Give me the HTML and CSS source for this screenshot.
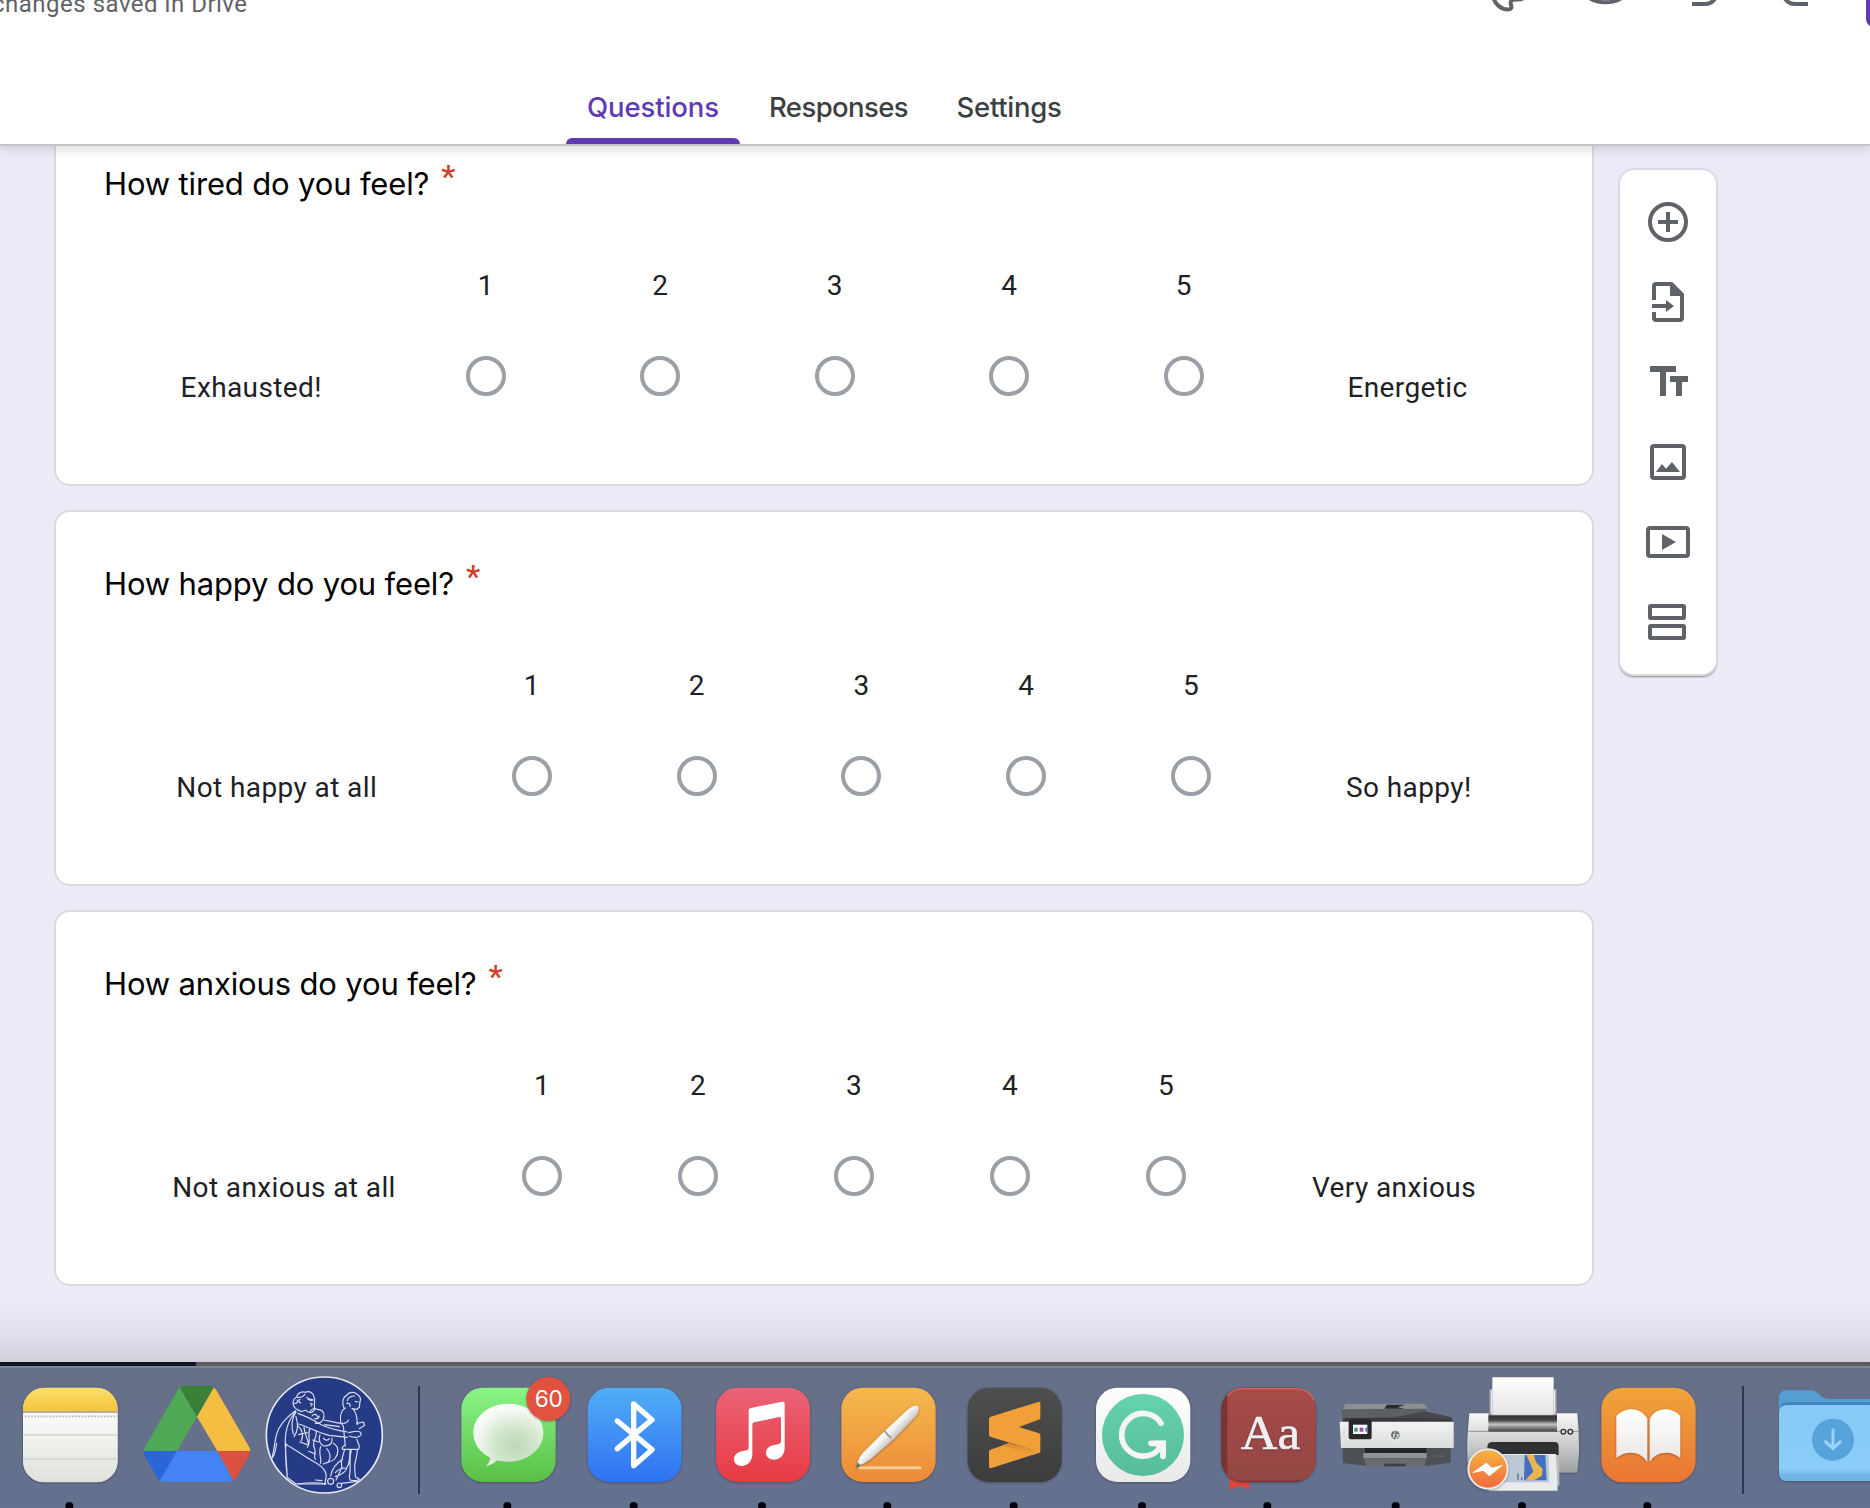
FILE: index.html
```html
<!DOCTYPE html>
<html lang="en">
<head>
<meta charset="utf-8">
<title>Form editor</title>
<link rel="stylesheet" href="styles.css">
</head>
<body>
<div class="screen">
  <header class="header">
    <div class="header-top">
      <span class="save-state">changes saved in Drive</span>
      <svg class="header-icons" width="330" height="14" viewBox="0 0 330 14" fill="none" stroke="#5f6368" stroke-width="4">
        <path d="M3-3C5 4 11 9.500 17.500 9.500c4 0 4.500-2 3.500-4.500C20 1.500 21-.500 25-.500c5 .500 9-.500 12-4"/>
        <path d="M98-3a24 17 0 0 0 35 0"/>
        <path d="M202 4h13c5 0 9-3 11-7M318 4h-13c-5 0-9-3-11-7"/>
      </svg>
      <span class="send-button"></span>
    </div>
    <nav class="tabs">
      <a class="tab tab-active">Questions</a>
      <a class="tab tab-responses">Responses</a>
      <a class="tab tab-settings">Settings</a>
    </nav>
  </header>

  <main class="canvas">
    <div class="cards">
      <section class="card">
        <h2 class="question">How tired do you feel?<span class="required">*</span></h2>
        <div class="scale scale-tired">
          <span class="end">Exhausted!</span>
          <label class="choice">1<i class="radio"></i></label>
          <label class="choice">2<i class="radio"></i></label>
          <label class="choice">3<i class="radio"></i></label>
          <label class="choice">4<i class="radio"></i></label>
          <label class="choice">5<i class="radio"></i></label>
          <span class="end">Energetic</span>
        </div>
      </section>
      <section class="card">
        <h2 class="question">How happy do you feel?<span class="required">*</span></h2>
        <div class="scale scale-happy">
          <span class="end">Not happy at all</span>
          <label class="choice">1<i class="radio"></i></label>
          <label class="choice">2<i class="radio"></i></label>
          <label class="choice">3<i class="radio"></i></label>
          <label class="choice">4<i class="radio"></i></label>
          <label class="choice">5<i class="radio"></i></label>
          <span class="end">So happy!</span>
        </div>
      </section>
      <section class="card">
        <h2 class="question">How anxious do you feel?<span class="required">*</span></h2>
        <div class="scale scale-anxious">
          <span class="end">Not anxious at all</span>
          <label class="choice">1<i class="radio"></i></label>
          <label class="choice">2<i class="radio"></i></label>
          <label class="choice">3<i class="radio"></i></label>
          <label class="choice">4<i class="radio"></i></label>
          <label class="choice">5<i class="radio"></i></label>
          <span class="end">Very anxious</span>
        </div>
      </section>
    </div>

    <aside class="toolbar">
      <svg class="tool" viewBox="0 0 24 24"><g fill="none" stroke="#5f6368" stroke-width="2"><circle cx="12" cy="12" r="9"/><path d="M12 7v10M7 12h10"/></g></svg>
      <svg class="tool" viewBox="0 0 24 24"><path d="M5 11V4a1 1 0 0 1 1-1h7.600L19 8.400V20a1 1 0 0 1-1 1H6a1 1 0 0 1-1-1v-3" fill="none" stroke="#5f6368" stroke-width="2"/><path d="M13 2h1l6 6v1h-7zM4 13h7v-2l4 3-4 3v-2H4z" fill="#5f6368"/></svg>
      <svg class="tool" viewBox="0 0 24 24"><path d="M3 4h13v3h-5v12H8V7H3zM13 9h9v3h-3v7h-3v-7h-3z" fill="#5f6368"/></svg>
      <svg class="tool" viewBox="0 0 24 24"><rect x="4" y="4" width="16" height="16" rx="1" fill="none" stroke="#5f6368" stroke-width="2"/><path d="M6 17l3-4 2 2.400L14 12l4 5z" fill="#5f6368"/></svg>
      <svg class="tool" viewBox="0 0 24 24"><rect x="2" y="5" width="20" height="14" rx="1" fill="none" stroke="#5f6368" stroke-width="2"/><path d="M9 8l7 4-7 4z" fill="#5f6368"/></svg>
      <svg class="tool" viewBox="0 0 24 24"><g fill="none" stroke="#5f6368" stroke-width="2"><rect x="3" y="4" width="17" height="6" rx=".4"/><rect x="3" y="14" width="17" height="6" rx=".4"/></g></svg>
    </aside>
  </main>

  <div class="window-edge"></div>

  <footer class="dock">
    <!-- Notes -->
    <svg class="app" viewBox="23 84 380 420">
      <defs>
        <clipPath id="notesClip"><rect x="71" y="143" width="284" height="284" rx="64"/></clipPath>
        <linearGradient id="notesTop" x2="0" y2="1"><stop stop-color="#fbdf6c"/><stop offset="1" stop-color="#f5c43c"/></linearGradient>
        <linearGradient id="notesPaper" x2="0" y2="1"><stop stop-color="#fafaf9"/><stop offset="1" stop-color="#e1e1dc"/></linearGradient>
      </defs>
      <rect class="lift" x="71" y="143" width="284" height="284" rx="64" fill="#e1e1dc"/>
      <g clip-path="url(#notesClip)">
        <path fill="url(#notesPaper)" d="M71 217h284v210H71z"/>
        <path fill="url(#notesTop)" d="M71 143h284v71H71z"/>
        <path fill="#b5ad98" d="M71 213h284v6H71z"/>
        <path d="M76 229h278" stroke="#b9b9b9" stroke-width="5" stroke-dasharray="5 4.500"/>
        <path d="M71 285h284M71 357h284" stroke="#d2d2d0" stroke-width="5"/>
      </g>
      <circle cx="210" cy="498" r="12" fill="#04040f"/>
    </svg>
    <!-- Drive -->
    <svg class="app" viewBox="403 84 380 420">
      <path fill="#4fa955" d="M430 332 L533 152q4-9 8-9l51 87-60 103z"/>
      <path fill="#3a8038" d="M541 144q5-7 12-7h76q8 0 13 7l-50 86z"/>
      <path fill="#f5bd42" d="M642 143q5 2 9 9l98 170q3 6 3 11H653L592 230z"/>
      <path fill="#2a66d6" d="M430 333h102l-51 89q-5-3-7-7l-40-68q-4-8-4-14z"/>
      <path fill="#4483f5" d="M532 333h121l48 88q-6 4-12 4H494q-7 0-13-4z"/>
      <path fill="#d95140" d="M653 333h99q-1 8-4 14l-38 67q-4 6-9 7z"/>
    </svg>
    <!-- Emblem -->
    <svg class="app" viewBox="783 84 380 420">
      <circle cx="973" cy="285" r="174" fill="#263b86" stroke="#e9ebf4" stroke-width="5"/>
      <g fill="none" stroke="#d9def0" stroke-width="3.500" stroke-linecap="round" stroke-linejoin="round">
        <path d="M886 205c-12-14-6-30 4-34 2-14 18-18 26-14 14-6 26 4 26 14 6 8 0 18 1 26l1 12-8 8c-8 2-14-2-18-6M890 207c8 8 18 8 26 4M893 172c12 2 20-6 22-10M902 188c-6 0-8-8-2-10M924 178l12 4M931 190l6 2-4 6M884 190c6 2 10-4 8-10M940 180c-8-4-16 0-20-8"/>
        <path d="M886 212c-24 18-48 40-56 70-6 24-8 50-14 72M818 352c10-14 8-28 12-42M888 214c-26 28-34 64-32 104l6 96M862 414c-4-40-8-70-4-104M860 314c30 18 60 40 90 56 20 12 32 26 28 44l-4 20M888 216c-12 18-16 40-8 66M888 230c6 20 6 44-6 60M864 414l24 18 90 0M892 256c14 12 20 28 12 46M946 420l20 2M896 252c30 10 60 26 92 34l54 6"/>
        <path d="M894 220c30 10 52 24 70 34 30 14 54 18 78 22M930 218c2-12 14-14 22-10 12 0 22 8 20 22-2 16-16 22-26 20M936 228c6-8 14-6 16 2M944 236c8 2 12-2 14-8M972 240l48 10M974 254l44 6"/>
        <path d="M1032 204c-8-18-2-34 8-38 8-12 24-10 30-4 10 4 14 16 10 22l-2 18-8 6-14-2M1042 182c0-8 12-14 22-14M1040 190c8-2 12 4 10 10M1066 184l8 2M1036 204c-14 8-16 28-14 44l8 10 6 60M1022 248c10 4 20 0 24-8M1058 206c12 12 14 28 14 48M1070 250l20-4 4 10-16 10M1046 278c10-2 24-8 34-2 8 6 2 12-4 14-10 4-20 2-28-2M1034 316c-10 6-8 10-6 12h48l2-10-8-20"/>
        <path d="M912 262c2 20 10 30 14 52M930 266c-10 18 6 34-8 56M948 272c6 20-16 34-4 54 6 12-6 22 2 32M960 284c-6 14 0 30 12 34 14 0 26-4 24-24M970 294c4 8 14 8 18 2M962 320c-8 20 4 38 0 50M1000 310c18 10 16 32 6 44-8 12-26 12-36 18M980 326c10 10 14 26 6 38M896 284l26-6M900 306l22 8M938 300l18 6M926 334l20 8"/>
        <path d="M1034 328c-6 24-14 36-8 54l-18 38M1050 330c0 22 0 40-10 54-2 16-24 22-34 26M1072 330c0 20-8 34-8 50l2 30 12 8c-6 6-18 4-28 2l-2-10c6-26-2-54 6-78M1028 358c-16 10-32 26-36 50M1040 384c-16 0-28 6-34 14"/>
        <circle cx="992" cy="424" r="9"/><circle cx="1018" cy="436" r="7"/><path d="M892 432c28-4 58-6 86 0M1024 430l48-6"/>
      </g>
    </svg>
    <i class="divider divider-left"></i>
    <!-- Messages -->
    <svg class="app" viewBox="17 84 380 420">
      <defs>
        <linearGradient id="msgBg" x2="0" y2="1"><stop stop-color="#8af584"/><stop offset="1" stop-color="#59bf47"/></linearGradient>
        <radialGradient id="msgBubble" cx=".6" cy=".68" r=".68"><stop stop-color="#bcd9b5"/><stop offset=".45" stop-color="#d3e6ce"/><stop offset=".8" stop-color="#f1f7ef"/><stop offset="1" stop-color="#fdfefd"/></radialGradient>
      </defs>
      <rect class="lift" x="66" y="143" width="283" height="283" rx="64" fill="url(#msgBg)"/>
      <path fill="url(#msgBubble)" d="M207 191c58 0 105 38 105 87s-47 87-105 87c-12 0-22-1-33-4-9 9-22 15-34 17 7-6 12-16 13-25-31-15-51-43-51-75 0-49 47-87 105-87z"/>
      <circle class="lift" cx="327" cy="177" r="66" fill="#e25241"/>
      <text x="328" y="202" font-family="Inter, sans-serif" font-size="68" letter-spacing="-1" text-anchor="middle" fill="#fff">60</text>
      <circle cx="204" cy="498" r="12" fill="#04040f"/>
    </svg>
    <!-- Bluetooth -->
    <svg class="app" viewBox="397 84 380 420">
      <defs><linearGradient id="btBg" x2="0" y2="1"><stop stop-color="#51aef5"/><stop offset="1" stop-color="#2f72f3"/></linearGradient></defs>
      <rect class="lift" x="444" y="143" width="282" height="283" rx="64" fill="url(#btBg)"/>
      <path d="M533 243L637 329 582 377V192L637 239 533 326" fill="none" stroke="#fff" stroke-width="16" stroke-linecap="round" stroke-linejoin="round"/>
      <circle cx="582" cy="498" r="12" fill="#04040f"/>
    </svg>
    <!-- Music -->
    <svg class="app" viewBox="777 84 380 420">
      <defs><linearGradient id="musicBg" x2="0" y2="1"><stop stop-color="#ea6377"/><stop offset="1" stop-color="#e73b43"/></linearGradient></defs>
      <rect class="lift" x="828" y="143" width="282" height="283" rx="64" fill="url(#musicBg)"/>
      <path fill="#fff" d="M926 211q0-6 7-7l94-19q7-1 7 6v133c0 21-14 35-32 35-14 0-24-8-24-20 0-13 10-21 24-24l15-3q6-2 6-8v-68q0-6-6-5l-75 16q-5 1-5 7v88c0 21-14 36-32 36-14 0-23-9-23-20 0-13 10-21 23-24l15-3q6-2 6-8z"/>
      <circle cx="966" cy="498" r="12" fill="#04040f"/>
    </svg>
    <!-- Pages -->
    <svg class="app" viewBox="17 84 380 420">
      <defs>
        <linearGradient id="pagesBg" x2="0" y2="1"><stop stop-color="#f5b94d"/><stop offset="1" stop-color="#ec8b38"/></linearGradient>
        <linearGradient id="penBody" gradientUnits="userSpaceOnUse" x1="190" y1="260" x2="225" y2="295"><stop stop-color="#fff"/><stop offset=".5" stop-color="#f5f5f5"/><stop offset="1" stop-color="#c9c4c0"/></linearGradient>
      </defs>
      <rect class="lift" x="66" y="143" width="283" height="283" rx="64" fill="url(#pagesBg)"/>
      <path d="M122 383h180" stroke="#f8cc99" stroke-width="9" stroke-linecap="round"/>
      <path class="lift" fill="url(#penBody)" d="M108 385l12-32 10-14 66-66 70-65c12-9 24-14 30-11 6 4 3 17-5 30l-64 68-72 62-22 14-12 4z"/>
      <path d="M196 273q8 12 20 21" fill="none" stroke="#9b948c" stroke-width="5"/><path d="M108 385l7-18 9 10z" fill="#776c53"/>
      <circle cx="204" cy="498" r="12" fill="#04040f"/>
    </svg>
    <!-- Sublime Text -->
    <svg class="app" viewBox="397 84 380 420">
      <defs>
        <linearGradient id="sublBg" x2="0" y2="1"><stop stop-color="#4e4e4e"/><stop offset="1" stop-color="#3d3d3d"/></linearGradient>
        <linearGradient id="sublShade" x2="0" y2="1"><stop stop-color="#d88a2b"/><stop offset="1" stop-color="#f19f38"/></linearGradient>
      </defs>
      <rect class="lift" x="444" y="143" width="282" height="283" rx="64" fill="url(#sublBg)"/>
      <path fill="#f19f38" d="M508 334q0-3 4-5l56-19 90 22 4 5-146 47q-8 2-8-3z"/>
      <path fill="url(#sublShade)" d="M568 309l94 28-24 8-90-29z"/>
      <path fill="#f19f38" d="M508 237q0-5 5-7l143-44q6-2 6 4v47l-64 24 60 19q4 2 4 6v50l-150-46q-4-1-4-6z"/>
      <circle cx="582" cy="498" r="12" fill="#04040f"/>
    </svg>
    <!-- Grammarly -->
    <svg class="app" viewBox="777 84 380 420">
      <defs>
        <linearGradient id="gramBg" x2="0" y2="1"><stop stop-color="#fefefe"/><stop offset="1" stop-color="#e9e9e9"/></linearGradient>
        <linearGradient id="gramDisc" x2="0" y2="1"><stop stop-color="#65d3ac"/><stop offset="1" stop-color="#57bd98"/></linearGradient>
      </defs>
      <rect class="lift" x="828" y="143" width="283" height="283" rx="64" fill="url(#gramBg)"/>
      <circle cx="969" cy="285" r="123" fill="url(#gramDisc)"/>
      <g fill="none" stroke="#f5f5f5" stroke-width="17" stroke-linecap="round"><path d="M1023 250A64 64 0 1 0 1016 328"/><path d="M993 310h36v39"/></g>
      <path fill="#f5f5f5" d="M1000 302h38v45l-16-14-12-10z"/>
      <circle cx="966" cy="498" r="12" fill="#04040f"/>
    </svg>
    <!-- Dictionary -->
    <svg class="app" viewBox="17 84 380 420">
      <defs><linearGradient id="dictBg" x2="0" y2="1"><stop stop-color="#a84b49"/><stop offset="1" stop-color="#934744"/></linearGradient></defs>
      <path fill="#d9493c" d="M90 405h60v43l-30-9-30 10z"/>
      <rect class="lift" x="66" y="143" width="283" height="283" rx="64" fill="#7d3331"/>
      <path fill="url(#dictBg)" d="M84 170q18-24 46-24h155q64 0 64 64v148q0 64-64 64H130q-30 0-46-18z"/>
      <path d="M84 168q16-22 46-22h155q45 0 58 34" fill="none" stroke="#dc6762" stroke-width="4"/>
      <text class="lift" x="213" y="328" font-family="'Liberation Serif', serif" font-size="147" textLength="178" lengthAdjust="spacingAndGlyphs" text-anchor="middle" fill="#f0eff0" stroke="#f0eff0" stroke-width="2">Aa</text>
      <circle cx="204" cy="498" r="12" fill="#04040f"/>
    </svg>
    <!-- HP printer -->
    <svg class="app" viewBox="397 84 380 420">
      <defs><linearGradient id="hpFace" x2="0" y2="1"><stop stop-color="#f2f3f3"/><stop offset="1" stop-color="#d9dcdd"/></linearGradient></defs>
      <path fill="#8c8f92" d="M437 192l236-1 13 16-8 8H425z"/>
      <path fill="#5d6063" d="M425 208l260-2-10 10 79 16 8 14H430z"/>
      <path fill="#393b3e" d="M432 234l322-2 8 15H428z"/>
      <path fill="#46484b" d="M572 234l104-20 78 17v6z"/>
      <path fill="#2a2b2d" d="M562 194l54 0-22 8 20 4h-60z"/>
      <path fill="#4b5155" d="M429 322h324v46l-76 10H504l-74-9z"/>
      <path fill="url(#hpFace)" d="M420 245h342v79H424z"/>
      <path fill="#232527" d="M496 324h184v16H496z"/><path fill="#8f9396" d="M491 339h190v15H491z"/>
      <path fill="#666c70" d="M493 355h187l-4 24H500z"/><path fill="#3c4043" d="M554 371h64v8h-64z"/>
      <rect x="447" y="238" width="69" height="60" rx="8" fill="#26282a"/><path fill="#f6f7fa" d="M460 254h43v28h-43z"/>
      <path fill="#41977b" d="M464 263h10v12h-10z"/><path fill="#a64b93" d="M480 263h11v12h-11z"/><path fill="#447ad0" d="M497 263h6v12h-6z"/>
      <circle cx="587" cy="285" r="13" fill="#6b6e70"/><path d="M587 273l-7 22M579 284q8-4 5 4l-3 6M594 284l-7 20M590 284q9-3 6 5-2 5-8 4" stroke="#eceded" stroke-width="2.500" fill="none"/>
      <path d="M433 262v16" stroke="#c5c8c9" stroke-width="5" stroke-dasharray="3 4"/><path d="M699 348h34" stroke="#666b6e" stroke-width="3"/>
      <circle cx="588" cy="498" r="12" fill="#04040f"/>
    </svg>
    <!-- Printer queue -->
    <svg class="app" viewBox="777 84 380 420">
      <defs>
        <linearGradient id="prBody" x2="0" y2="1"><stop stop-color="#f7f7f7"/><stop offset=".55" stop-color="#c9cacb"/><stop offset="1" stop-color="#9d9ea0"/></linearGradient>
        <linearGradient id="prPaper" x2="0" y2="1"><stop stop-color="#fff"/><stop offset="1" stop-color="#e4e4e5"/></linearGradient>
        <linearGradient id="prRoll" x2="0" y2="1"><stop stop-color="#333"/><stop offset=".3" stop-color="#444"/><stop offset=".55" stop-color="#c4c4c4"/><stop offset="1" stop-color="#393939"/></linearGradient>
        <linearGradient id="prBadge" x2="0" y2="1"><stop stop-color="#f6b53d"/><stop offset="1" stop-color="#ef6840"/></linearGradient>
      </defs>
      <path fill="#9c9da0" d="M868 148h202v85H868z"/><path fill="#e8e8e8" d="M872 150h4v72h-4zM1062 150h4v72h-4z"/>
      <path fill="url(#prPaper)" d="M877 112h184v114H877z"/>
      <path class="lift" fill="url(#prBody)" d="M808 220h58v6h204v-6h62q6 60 5 120l-5 58H806q-8-60-2-132z"/>
      <path fill="url(#prRoll)" d="M865 226h206v49H865z"/><path d="M802 274h334" stroke="#6d6e70" stroke-width="2"/>
      <g fill="#ddd" stroke="#333" stroke-width="4"><circle cx="1090" cy="275" r="7"/><circle cx="1111" cy="275" r="7"/></g>
      <path fill="#303133" d="M878 306h186q12 0 12 13v26H862v-24q0-15 16-15z"/>
      <path fill="#b9bbbd" d="M1066 345h12v92h-12z"/>
      <path fill="#e8eaec" d="M888 342h180l5 110H866z"/><path fill="#bdc8d7" d="M900 345h146l2 82H890z"/>
      <path fill="#456fc2" d="M974 345h62l4 76h-68z"/><path fill="#e9b650" d="M978 343l24 2 6 22 20 20-2 20-24 14-26-2 24-24-6-18z"/>
      <path d="M954 400v20M965 412v8" stroke="#52719d" stroke-width="4"/>
      <circle class="lift" cx="864" cy="387" r="59" fill="url(#prBadge)" stroke="#ececef" stroke-width="6"/>
      <path fill="#fff" d="M815 400l44-32 17 15 34-9-42 35-18-17z"/>
      <circle cx="966" cy="498" r="12" fill="#04040f"/>
    </svg>
    <!-- Books -->
    <svg class="app" viewBox="77 84 380 420">
      <defs>
        <linearGradient id="booksBg" x2="0" y2="1"><stop stop-color="#f1a33b"/><stop offset="1" stop-color="#ea7633"/></linearGradient>
        <linearGradient id="booksPage" x2="0" y2="1"><stop stop-color="#fff"/><stop offset="1" stop-color="#e9e6e4"/></linearGradient>
      </defs>
      <rect class="lift" x="126" y="143" width="283" height="284" rx="64" fill="url(#booksBg)"/>
      <path class="lift" fill="url(#booksPage)" d="M171 228c26-28 72-28 93 8v131c-21-34-62-37-93-13zM271 236c21-36 67-36 92-8v126c-31-24-71-21-92 13z"/>
      <circle cx="264" cy="498" r="12" fill="#04040f"/>
    </svg>
    <i class="divider divider-right"></i>
    <!-- Downloads -->
    <svg class="app" viewBox="636 84 380 420">
      <defs><linearGradient id="dlFront" x2="0" y2="1"><stop stop-color="#85c9f6"/><stop offset=".84" stop-color="#8acdf8"/><stop offset=".87" stop-color="#75bbe9"/><stop offset="1" stop-color="#6db5e4"/></linearGradient></defs>
      <path fill="#559dd3" d="M657 174q0-23 24-23h70c24 0 28 26 55 26h210v80H657z"/>
      <path fill="#3e87c9" d="M681 187h335v12H661q4-12 20-12z"/>
      <path class="lift" fill="url(#dlFront)" d="M657 220q0-24 24-24h335v227H681q-24 0-24-24z"/>
      <path d="M661 209q6-12 20-12h335M658 396h358" fill="none" stroke="#a5dafa" stroke-width="2"/>
      <circle cx="819" cy="299" r="63" fill="#59a3dc"/>
      <path d="M819 270v56M797 305l22 21 22-21" fill="none" stroke="#9bd4fa" stroke-width="9" stroke-linecap="round" stroke-linejoin="round"/>
    </svg>
  </footer>
</div>
</body>
</html>
```

FILE: styles.css
```css
* { box-sizing: border-box; }

body {
  margin: 0;
  background: #eeeaf8;
  font-family: Roboto, "Liberation Sans", sans-serif;
  color: #202124;
}

.screen {
  width: 1870px;
  height: 1508px;
  overflow: hidden;
  display: flex;
  flex-direction: column;
}

/* Header */
.header {
  position: relative;
  z-index: 2;
  flex: none;
  height: 146px;
  display: flex;
  flex-direction: column;
  justify-content: space-between;
  background: #fff;
  border-bottom: 2px solid #c5c3cb;
  box-shadow: 0 2px 12px rgba(0, 0, 0, .16);
}

.header-top {
  display: flex;
  align-items: flex-start;
  height: 40px;
}

.save-state {
  flex: none;
  width: 1490px;
  margin: -10px 0 0 -8px;
  font-size: 24px;
  line-height: 28px;
  letter-spacing: .5px;
  color: #5f6368;
  white-space: nowrap;
}

.header-icons { flex: none; margin-left: 8px; }

.send-button {
  flex: none;
  width: 40px;
  height: 27px;
  margin-left: 46px;
  border-radius: 0 0 0 8px;
  background: #5f3ab2;
}

.tabs {
  display: flex;
  gap: 8px;
  height: 72px;
  padding-left: 566px;
}

.tab {
  display: flex;
  justify-content: center;
  height: 72px;
  padding-top: 18px;
  font: 550 27.5px/34px Inter, sans-serif;
  color: #3c4043;
}

.tab-active {
  position: relative;
  width: 174px;
  letter-spacing: -.1px;
  color: #5f3ab2;
}

.tab-active::after {
  content: "";
  position: absolute;
  inset: auto 0 0;
  height: 6px;
  border-radius: 6px 6px 0 0;
  background: #5f3ab2;
}

.tab-responses { width: 181px; letter-spacing: -.6px; }
.tab-settings { width: 144px; letter-spacing: -.3px; }

/* Form */
.canvas {
  flex: none;
  height: 1216px;
  display: flex;
  align-items: flex-start;
  padding-left: 54px;
  background: linear-gradient(#eeeaf8 1155px, #dfdbe8 1194px, #d3d0dc);
}

.cards {
  width: 1540px;
  margin-top: -36px;
  display: flex;
  flex-direction: column;
  gap: 24px;
}

.card {
  height: 376px;
  padding: 48px 48px 0;
  border: 2px solid #dadce0;
  border-radius: 16px;
  background: #fff;
}

.question {
  display: flex;
  height: 48px;
  margin: 0;
  font: 400 31px/48px Inter, sans-serif;
  letter-spacing: -.15px;
  color: #000;
}

.required {
  margin-left: 12px;
  font: 500 32px/32px Roboto, sans-serif;
  letter-spacing: 0;
  color: #d0402f;
}

.scale {
  display: grid;
  height: 170px;
  margin-top: 32px;
  font-size: 28px;
  line-height: 40px;
  letter-spacing: .4px;
}

.scale-tired { grid-template-columns: 294.500px repeat(5, 174.500px) 1fr; }
.scale-happy { grid-template-columns: 345.500px repeat(5, 164.800px) 1fr; }
.scale-anxious { grid-template-columns: 360px repeat(5, 156px) 1fr; }

.end {
  padding-top: 128px;
  text-align: center;
}

.choice {
  display: flex;
  flex-direction: column;
  align-items: center;
  gap: 50px;
  padding-top: 26px;
}

.radio {
  width: 40px;
  height: 40px;
  border: 4px solid #9aa0a6;
  border-radius: 50%;
}

.toolbar {
  width: 100px;
  height: 508px;
  margin: 22px 0 0 24px;
  padding-top: 28px;
  display: flex;
  flex-direction: column;
  align-items: center;
  gap: 32px;
  border: 2px solid #dadae0;
  border-radius: 16px;
  background: #fff;
  box-shadow: 0 2px 2px -1px rgba(60, 64, 67, .6);
}

.tool {
  flex: none;
  width: 48px;
  height: 48px;
}

/* Dock */
.window-edge {
  flex: none;
  height: 4px;
  background: linear-gradient(90deg, #0f1422 195px, #5e5d5d 197px);
}

.dock {
  flex: none;
  height: 142px;
  display: flex;
  padding-left: 7.333px;
  border-top: 2px solid #7a869d;
  background: linear-gradient(#666f87, #64718f);
  overflow: hidden;
}

.app {
  flex: none;
  width: 126.667px;
  height: 140px;
}

.lift { filter: drop-shadow(0 2px 3px rgba(20, 20, 40, .4)); }

.divider {
  flex: none;
  width: 2px;
  height: 108px;
  margin-top: 18px;
  background: #2c3654;
}

.divider-left { margin-left: 30.667px; margin-right: 25.333px; }
.divider-right { margin-left: 30px; margin-right: 28px; }
```
